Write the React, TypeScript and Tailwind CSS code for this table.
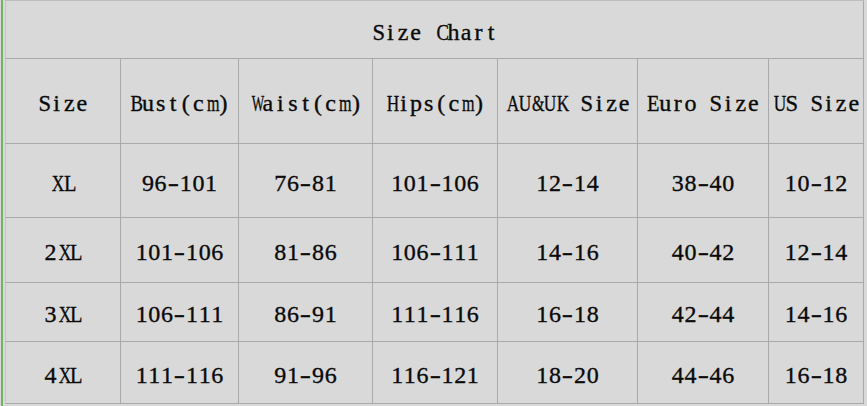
import React from "react";

const headers = ["Size", "Bust(cm)", "Waist(cm)", "Hips(cm)", "AU&UK Size", "Euro Size", "US Size"];
const rows: { h: string; cells: string[] }[] = [
  { h: "h-[74px]", cells: ["XL", "96-101", "76-81", "101-106", "12-14", "38-40", "10-12"] },
  { h: "h-[65px]", cells: ["2XL", "101-106", "81-86", "106-111", "14-16", "40-42", "12-14"] },
  { h: "h-[59px]", cells: ["3XL", "106-111", "86-91", "111-116", "16-18", "42-44", "14-16"] },
  { h: "h-[62px]", cells: ["4XL", "111-116", "91-96", "116-121", "18-20", "44-46", "16-18"] },
];

const squeeze: Record<string, string> = {
  C: "scale-x-[0.78]",
  B: "scale-x-[0.78]",
  W: "scale-x-[0.55]",
  H: "scale-x-[0.72]",
  A: "scale-x-[0.72]",
  U: "scale-x-[0.72]",
  "&": "scale-x-[0.67]",
  K: "scale-x-[0.72]",
  X: "scale-x-[0.72]",
  m: "scale-x-[0.67]",
  E: "scale-x-[0.85]",
  L: "scale-x-[0.85]",
  S: "scale-x-[0.94]",
  "-": "scale-x-[1.4]",
};

function Mono({ text }: { text: string }) {
  return (
    <span className="inline-flex" aria-label={text}>
      {text.split("").map((ch, i) => (
        <span key={i} className={`inline-block w-[12.6px] text-center ${squeeze[ch] ?? ""}`}>
          {ch === " " ? "\u00a0" : ch}
        </span>
      ))}
    </span>
  );
}

const cellBase =
  "flex items-center justify-center border-l border-b border-[#a9a9a9] whitespace-nowrap pt-1";

export default function App() {
  return (
    <div
      className="w-[867px] h-[406px] bg-[#d9d9d9] overflow-hidden flex text-[24px] leading-none text-[#0a0a0a] [-webkit-text-stroke:0.35px_#0a0a0a]"
      style={{ fontFamily: '"Liberation Serif", "Times New Roman", serif' }}
    >
      <div className="ml-px w-[2px] h-full bg-[#6fb25f] shrink-0" />
      <div className="ml-[2px] w-[859px] border-t border-[#bdbdbd]">
        <div className="grid grid-cols-[115px_118px_134px_125px_140px_131px_96px]">
          <div className={`${cellBase} col-span-7 h-[58px] border-r border-l-[#c4c4c4]`}>
            <Mono text="Size Chart" />
          </div>
          {headers.map((t, i) => (
            <div
              key={t}
              className={`${cellBase} h-[85px] ${i === 0 ? "border-l-[#c4c4c4]" : ""} ${i === 6 ? "border-r" : ""}`}
            >
              <Mono text={t} />
            </div>
          ))}
          {rows.map((r) =>
            r.cells.map((c, i) => (
              <div
                key={r.cells[0] + i}
                className={`${cellBase} ${r.h} ${i === 0 ? "border-l-[#c4c4c4]" : ""} ${i === 6 ? "border-r" : ""}`}
              >
                <Mono text={c} />
              </div>
            ))
          )}
        </div>
      </div>
    </div>
  );
}
